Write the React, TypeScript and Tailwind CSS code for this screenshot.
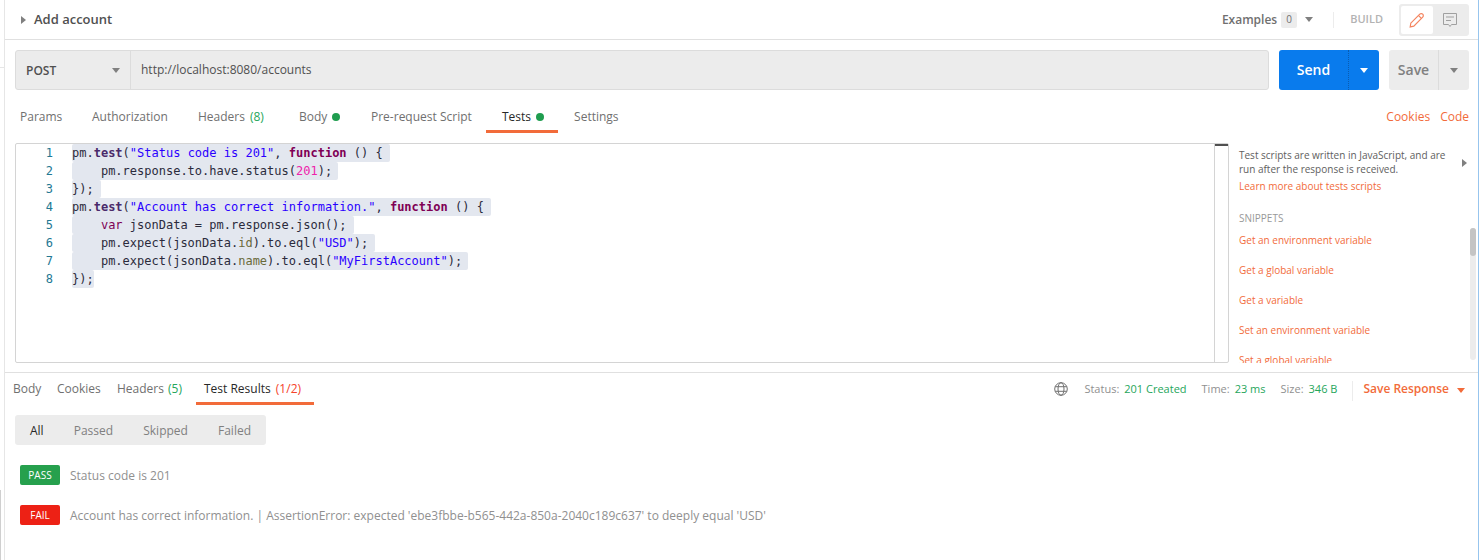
import { Fragment, type ReactNode } from 'react'

const OPEN_SANS = 'font-["Open_Sans",sans-serif]'

function Caret({ className }: { className: string }) {
  return (
    <svg width="8" height="5" viewBox="0 0 8 5" className={className}>
      <path d="M0 0h8L4 5z" fill="currentColor" />
    </svg>
  )
}

const K = ({ children }: { children: ReactNode }) => (
  <span className="font-bold text-[#7f0055]">{children}</span>
)
const S = ({ children }: { children: ReactNode }) => <span className="text-[#2a00ff]">{children}</span>
const P = ({ children }: { children: ReactNode }) => <span className="text-[#6a6a3a]">{children}</span>
const F = ({ children }: { children: ReactNode }) => (
  <span className="font-bold text-[#4a2a6a]">{children}</span>
)

const codeLines: { w: number; text: ReactNode }[] = [
  {
    w: 318,
    text: (
      <>
        pm.<F>test</F>(<S>"Status code is 201"</S>, <K>function</K> () {'{'}
      </>
    ),
  },
  {
    w: 266,
    text: (
      <>
        {'    '}pm.response.to.have.status(<span className="text-[#ee22aa]">201</span>);
      </>
    ),
  },
  { w: 29, text: '});' },
  {
    w: 419,
    text: (
      <>
        pm.<F>test</F>(<S>"Account has correct information."</S>, <K>function</K> () {'{'}
      </>
    ),
  },
  {
    w: 282,
    text: (
      <>
        {'    '}<span className="text-[#7f0055]">var</span> jsonData = pm.response.json();
      </>
    ),
  },
  {
    w: 303,
    text: (
      <>
        {'    '}pm.expect(jsonData.<P>id</P>).to.eql(<S>"USD"</S>);
      </>
    ),
  },
  {
    w: 396,
    text: (
      <>
        {'    '}pm.expect(jsonData.<P>name</P>).to.eql(<S>"MyFirstAccount"</S>);
      </>
    ),
  },
  { w: 22, text: '});' },
]

const requestTabs = [
  { label: 'Params', w: 'w-[72px]' },
  { label: 'Authorization', w: 'w-[106px]' },
  { label: 'Headers', w: 'w-[101px]', count: '(8)' },
  { label: 'Body', w: 'w-[72px]', dot: true },
  { label: 'Pre-request Script', w: 'w-[131px]' },
]

const snippets = [
  'Get an environment variable',
  'Get a global variable',
  'Get a variable',
  'Set an environment variable',
  'Set a global variable',
]

export default function App() {
  return (
    <div className={`flex h-[560px] w-[1479px] overflow-hidden bg-white text-xs text-[#808080] ${OPEN_SANS}`}>
      {/* collapsed sidebar sliver */}
      <div className="flex w-[5px] shrink-0 flex-col justify-between border-r border-[#e6e6e6]">
        <div className="mt-[67px] h-px bg-[#e6e6e6]" />
        <div className="h-[70px] w-px bg-[#cfcfcf]" />
      </div>

      <div className="flex min-w-0 flex-1 flex-col">
        {/* title bar */}
        <div className="flex h-10 shrink-0 items-center border-b border-[#e0e0e0] pl-[16px] pr-[9px]">
          <svg width="5" height="8" viewBox="0 0 5 8" className="text-[#808080]">
            <path d="M0 0l5 4-5 4z" fill="currentColor" />
          </svg>
          <span className="ml-[8px] text-[13px] font-semibold text-[#505050]">Add account</span>
          <span className="ml-auto text-xs font-semibold text-[#707070]">Examples</span>
          <span className="ml-[4px] flex h-[16px] w-[16px] items-center justify-center rounded-[2px] bg-[#ececec] text-[10px] text-[#707070]">
            0
          </span>
          <Caret className="ml-[8px] text-[#808080]" />
          <span className="ml-[20px] h-[16px] w-px bg-[#ececec]" />
          <span className="ml-[16px] text-[11px] font-semibold text-[#b3b3b3]">BUILD</span>
          <div className="ml-[16px] flex h-[32px] w-[70px] rounded-[3px] bg-[#ececec] p-[2px]">
            <div className="flex w-[32px] items-center justify-center rounded-[2px] bg-white">
              <svg width="16" height="16" viewBox="0 0 16 16" fill="none" stroke="#f4845f" strokeWidth="1.2">
                <path d="M1.8 11.2 10.8 2.2a1.7 1.7 0 0 1 2.9 2.9L4.8 14.2 1.2 14.9z" />
                <path d="M9.6 3.6l2.8 2.8" />
              </svg>
            </div>
            <div className="flex flex-1 items-center justify-center">
              <svg width="16" height="16" viewBox="0 0 16 16" fill="none" stroke="#a0a0a0" strokeWidth="1">
                <path d="M1.5 1.5h13v11h-5l-1.5 2-1.5-2h-5z" />
                <path d="M4 5h8M4 8.5h5" />
              </svg>
            </div>
          </div>
        </div>

        {/* url bar */}
        <div className="mt-[10px] flex h-10 shrink-0 pl-[10px] pr-[9px]">
          <div className="flex min-w-0 flex-1 rounded-[3px] border border-[#dcdcdc] bg-[#ececec]">
            <div className="flex w-[115px] shrink-0 items-center justify-between border-r border-[#dcdcdc] pl-[10px] pr-[10px]">
              <span className="pt-[2px] text-xs font-semibold text-[#505050]">POST</span>
              <Caret className="mt-px text-[#808080]" />
            </div>
            <span className="flex items-center pb-px pl-[10px] text-xs text-[#505050]">http://localhost:8080/accounts</span>
          </div>
          <div className="ml-[10px] flex w-[100px] rounded-[3px] bg-[#097bed] text-white">
            <span className="flex w-[69px] items-center justify-center text-[14px] font-semibold">Send</span>
            <span className="flex flex-1 items-center justify-center border-l border-dotted border-[#0a5cb0]">
              <Caret className="text-white" />
            </span>
          </div>
          <div className="ml-[10px] flex w-[80px] rounded-[3px] bg-[#ececec]">
            <span className="flex w-[49px] items-center justify-center text-[14px] font-semibold text-[#808080]">Save</span>
            <span className="flex flex-1 items-center justify-center border-l border-[#dcdcdc]">
              <Caret className="text-[#808080]" />
            </span>
          </div>
        </div>

        {/* request tabs */}
        <div className="mt-[10px] flex h-[33px] shrink-0 items-start pl-[15px] pr-[9px] pt-[9px] text-[#707070]">
          {requestTabs.map((tab) => (
            <div key={tab.label} className={`flex items-center ${tab.w}`}>
              {tab.label}
              {tab.count && <span className="ml-[5px] text-[#26a65b]">{tab.count}</span>}
              {tab.dot && <span className="ml-[5px] h-2 w-2 rounded-full bg-[#1f9d4f]" />}
            </div>
          ))}
          <div className="relative flex items-center text-[#282828]">
            Tests
            <span className="ml-[5px] h-2 w-2 rounded-full bg-[#1f9d4f]" />
            <span className="absolute left-[-16px] top-[21px] h-[3px] w-[72px] bg-[#f26b3a]" />
          </div>
          <div className="ml-[30px]">Settings</div>
          <span className="ml-auto text-[#f26b3a]">Cookies</span>
          <span className="ml-[10px] text-[#f26b3a]">Code</span>
        </div>

        {/* editor + snippets */}
        <div className="mt-[10px] flex h-[220px] shrink-0 pl-[10px]">
          <div className="flex min-w-0 flex-1 rounded-[2px] border border-[#d4d4d4]">
            <div
              className={`grid min-w-0 flex-1 content-start grid-cols-[56px_1fr] font-["DejaVu_Sans_Mono",monospace] text-xs leading-[18px] text-[#2b2b3c]`}
            >
              {codeLines.map((line, i) => (
                <Fragment key={i}>
                  <div className="pr-[19px] text-right text-[#237893]">{i + 1}</div>
                  <div className="whitespace-pre">
                    <span className="inline-block rounded-[2px] bg-[#e3e7ef]" style={{ width: line.w }}>
                      {line.text}
                    </span>
                  </div>
                </Fragment>
              ))}
            </div>
            <div className="w-[14px] shrink-0 border-l border-[#d4d4d4]">
              <div className="h-[2px] bg-[#505050]" />
            </div>
          </div>
          <div className="relative w-[249px] shrink-0 overflow-hidden pl-[10px] text-[10px] leading-[14px]">
            <p className="mt-[5px] w-[210px] text-[#606060]">
              Test scripts are written in JavaScript, and are run after the response is received.
            </p>
            <p className="mt-[3px] text-[#f26b3a]">Learn more about tests scripts</p>
            <p className="mt-[18px] text-[#999999]">SNIPPETS</p>
            <div className="mt-[8px] flex flex-col gap-[16px]">
              {snippets.map((s) => (
                <span key={s} className="text-[#f26b3a]">
                  {s}
                </span>
              ))}
            </div>
            <svg width="5" height="8" viewBox="0 0 5 8" className="absolute left-[233px] top-[16px] text-[#808080]">
              <path d="M0 0l5 4-5 4z" fill="currentColor" />
            </svg>
            <div className="absolute left-[241px] top-[85px] h-[132px] w-[6px] rounded-[3px] bg-[#ececec]">
              <div className="h-[28px] rounded-[3px] bg-[#c4c4c4]" />
            </div>
          </div>
        </div>

        {/* response */}
        <div className="mt-[9px] flex min-h-0 flex-1 flex-col border-t border-[#e0e0e0]">
          <div className="flex h-[32px] shrink-0 items-start pl-[8px] pr-[13px] pt-[8px]">
            <span className="w-[44px] text-[#707070]">Body</span>
            <span className="w-[60px] text-[#707070]">Cookies</span>
            <span className="w-[87px] text-[#707070]">
              Headers <span className="ml-px text-[#26a65b]">(5)</span>
            </span>
            <div className="relative text-[#282828]">
              Test Results <span className="ml-[2px] text-[#f4442a]">(1/2)</span>
              <span className="absolute left-[-8px] top-[21px] h-[3px] w-[118px] bg-[#f26b3a]" />
            </div>
            <svg width="14" height="14" viewBox="0 0 14 14" fill="none" stroke="#707070" strokeWidth="1" className="ml-auto mt-[1px]">
              <circle cx="7" cy="7" r="6.3" />
              <ellipse cx="7" cy="7" rx="3" ry="6.3" />
              <path d="M1.2 4.7h11.6M1.2 9.3h11.6" />
            </svg>
            <span className="ml-[16px] mt-[1px] text-[11px] text-[#909090]">Status:</span>
            <span className="ml-[5px] mt-[1px] text-[11px] text-[#26a65b]">201 Created</span>
            <span className="ml-[15px] mt-[1px] text-[11px] text-[#909090]">Time:</span>
            <span className="ml-[5px] mt-[1px] text-[11px] text-[#26a65b]">23 ms</span>
            <span className="ml-[15px] mt-[1px] text-[11px] text-[#909090]">Size:</span>
            <span className="ml-[5px] mt-[1px] text-[11px] text-[#26a65b]">346 B</span>
            <span className="ml-[15px] h-[20px] w-px bg-[#ececec]" />
            <span className="ml-[10px] font-semibold text-[#f26b3a]">Save Response</span>
            <Caret className="ml-[8px] mt-[7px] text-[#f26b3a]" />
          </div>
          <div className="ml-[10px] mt-[10px] flex h-[30px] w-[251px] items-center justify-between rounded-[3px] bg-[#ececec] pl-[15px] pr-[15px] pt-[2px] text-[#808080]">
            <span className="text-[#282828]">All</span>
            <span>Passed</span>
            <span>Skipped</span>
            <span>Failed</span>
          </div>
          <div className="ml-[15px] mt-[20px] flex items-center">
            <span className="flex h-[20px] w-[40px] items-center justify-center rounded-[2px] bg-[#26a04d] pt-px text-[10px] text-white">PASS</span>
            <span className="ml-[10px] pt-[2px] text-[#909090]">Status code is 201</span>
          </div>
          <div className="ml-[15px] mt-[20px] flex items-center">
            <span className="flex h-[20px] w-[40px] items-center justify-center rounded-[2px] bg-[#ed2115] pt-px text-[10px] text-white">FAIL</span>
            <span className="ml-[10px] pt-[2px] text-[#909090]">
              Account has correct information. | AssertionError: expected 'ebe3fbbe-b565-442a-850a-2040c189c637' to deeply equal 'USD'
            </span>
          </div>
        </div>
      </div>

      {/* window edge */}
      <div className="w-px shrink-0 bg-[#97c5ee]" />
    </div>
  )
}
